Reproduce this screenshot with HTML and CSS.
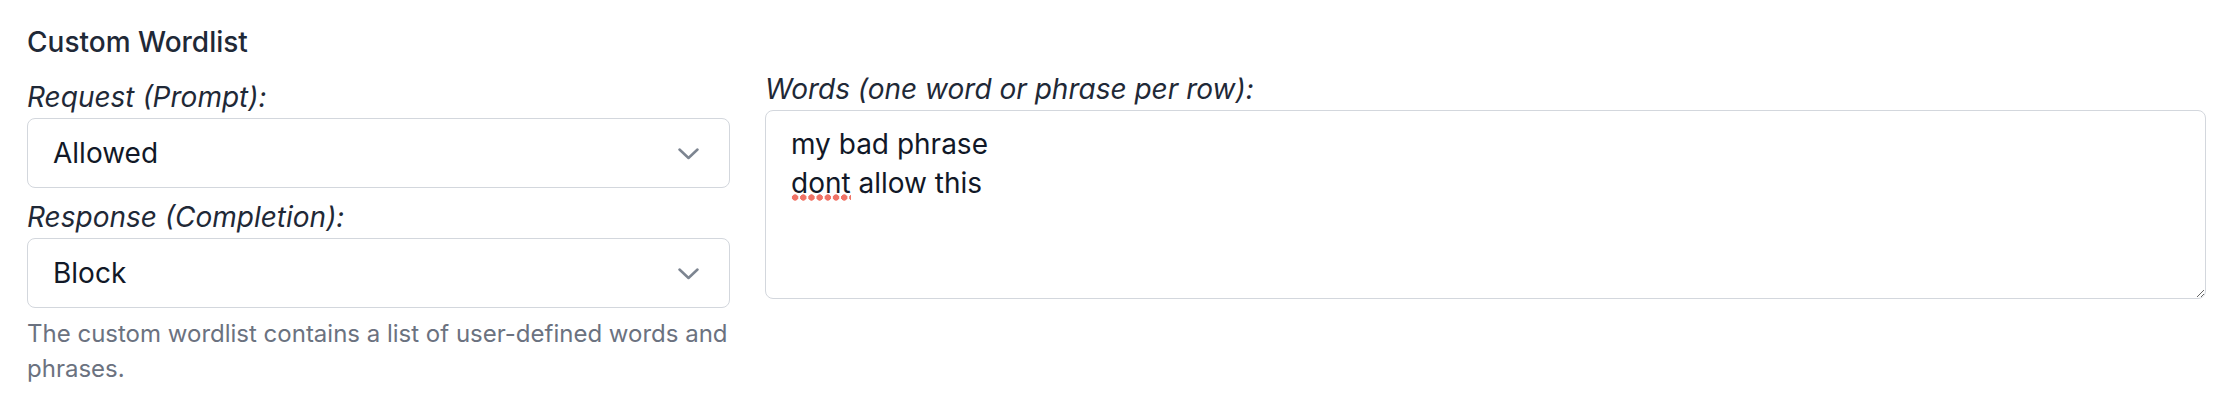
FILE: index.html
```html
<!DOCTYPE html>
<html lang="en">
<head>
<meta charset="utf-8">
<title>Custom Wordlist</title>
<link rel="stylesheet" href="styles.css">
</head>
<body>
<div class="panel">
  <div class="col-left">
    <h3 class="title">Custom Wordlist</h3>
    <label class="label first">Request (Prompt):</label>
    <div class="select">
      <span>Allowed</span>
      <svg class="chev" width="21" height="12" viewBox="0 0 21 12"><polyline points="1.5,1.5 10.5,10 19.5,1.5" fill="none" stroke="#7d8591" stroke-width="2.5" stroke-linecap="round" stroke-linejoin="round"/></svg>
    </div>
    <label class="label">Response (Completion):</label>
    <div class="select">
      <span>Block</span>
      <svg class="chev" width="21" height="12" viewBox="0 0 21 12"><polyline points="1.5,1.5 10.5,10 19.5,1.5" fill="none" stroke="#7d8591" stroke-width="2.5" stroke-linecap="round" stroke-linejoin="round"/></svg>
    </div>
    <p class="help">The custom wordlist contains a list of user-defined words and phrases.</p>
  </div>
  <div class="col-right">
    <label class="label first">Words (one word or phrase per row):</label>
    <div class="textarea" role="textbox"><div>my bad phrase</div><div><span class="misspelled">dont</span> allow this</div></div>
  </div>
</div>
</body>
</html>
```

FILE: styles.css
```css
* { box-sizing: border-box; }
html, body { margin: 0; padding: 0; background: #ffffff; }
body {
  font-family: Inter, "Noto Sans", "Liberation Sans", sans-serif;
  color: #1f2937;
  width: 2230px;
  height: 410px;
  overflow: hidden;
}
.panel {
  display: grid;
  grid-template-columns: 703px 1441px;
  column-gap: 35px;
  align-items: start;
  padding: 21px 0 0 27px;
}
.col-left { display: flex; flex-direction: column; }
.col-right { display: flex; flex-direction: column; margin-top: 47px; }
.title {
  margin: 0;
  font-size: 28px;
  line-height: 42px;
  font-weight: 500;
  color: #1f2937;
}
.label {
  display: block;
  font-size: 28px;
  line-height: 42px;
  font-style: italic;
  font-weight: 400;
  color: #1f2937;
  margin-top: 8px;
}
.col-left .label.first { margin-top: 13px; }
.col-right .label.first { margin-top: 0; }
.select {
  display: flex;
  align-items: center;
  justify-content: space-between;
  height: 70px;
  border: 1px solid #d3d7dd;
  border-radius: 8px;
  padding: 13px 30px 13px 25px;
  font-size: 28px;
  line-height: 42px;
  color: #111827;
  background: #fff;
}
.chev { display: block; flex: none; margin-top: 1px; }
.help {
  margin: 8px 0 0 0;
  font-size: 24px;
  line-height: 35px;
  color: #6b7280;
}
.textarea {
  height: 189px;
  border: 1px solid #d3d7dd;
  border-radius: 8px;
  padding: 14px 25px;
  font-size: 28px;
  line-height: 39px;
  color: #111827;
  background: #fff;
  overflow: auto;
  resize: vertical;
}
.misspelled {
  background-image: radial-gradient(circle, #f07366 2.9px, rgba(240,115,102,0) 3.4px);
  background-size: 8.2px 7px;
  background-repeat: repeat-x;
  background-position: 0 100%;
  padding-bottom: 1px;
}
```
